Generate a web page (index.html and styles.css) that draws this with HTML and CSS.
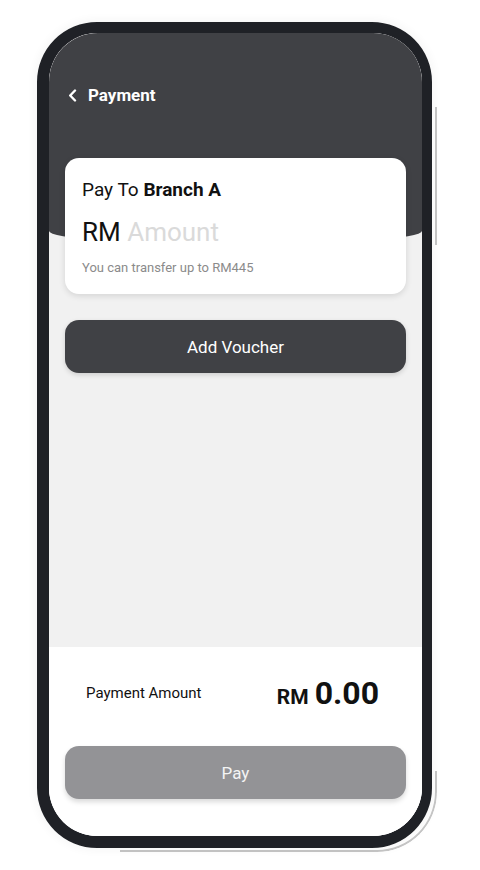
FILE: index.html
```html
<!DOCTYPE html>
<html lang="en">
<head>
<meta charset="utf-8">
<title>Payment</title>
<link rel="stylesheet" href="styles.css">
</head>
<body>
<div class="phone">
  <div class="screen">
    <header class="hero">
      <div class="titlebar">
        <svg class="back" width="9" height="13" viewBox="0 0 9 13" aria-hidden="true"><path d="M7 1.5 L2.2 6.5 L7 11.5" fill="none" stroke="#fff" stroke-width="2.4" stroke-linecap="round" stroke-linejoin="round"/></svg>
        <span class="title">Payment</span>
      </div>
    </header>
    <section class="card">
      <div class="payto">Pay To <b>Branch A</b></div>
      <div class="amount"><span class="cur">RM</span> <span class="ph">Amount</span></div>
      <div class="limit">You can transfer up to RM445</div>
    </section>
    <button class="voucher">Add Voucher</button>
    <div class="spacer"></div>
    <footer class="footer">
      <div class="total">
        <span class="label">Payment Amount</span>
        <span class="sum"><span class="rm">RM</span><span class="num">0.00</span></span>
      </div>
      <button class="pay">Pay</button>
    </footer>
  </div>
</div>
</body>
</html>
```

FILE: styles.css
```css
html {
  margin: 0;
  padding: 0;
  background: #ffffff;
}
body {
  margin: 0;
  padding: 0;
  width: 480px;
  height: 870px;
  overflow: hidden;
  font-family: Roboto, "Noto Sans", "Liberation Sans", sans-serif;
  color: #111;
}
.phone {
  position: relative;
  margin: 22px 0 0 37px;
  width: 395px;
  height: 826px;
  box-sizing: border-box;
  border-style: solid;
  border-color: #1f2126;
  border-width: 11px 10px 12px 12px;
  border-radius: 60px;
  box-shadow: 0 0 8px 3px rgba(0, 0, 0, 0.035);
}
.phone::before {
  content: "";
  position: absolute;
  top: 0;
  left: 71px;
  right: -15px;
  bottom: -16px;
  border-right: 2px solid #c6c6c6;
  border-bottom: 2px solid #c6c6c6;
  border-radius: 0 0 60px 0;
  z-index: -1;
  -webkit-mask-image: linear-gradient(to bottom, transparent 0 74px, #000 74px 212px, transparent 212px 738px, #000 738px);
  mask-image: linear-gradient(to bottom, transparent 0 74px, #000 74px 212px, transparent 212px 738px, #000 738px);
}
.screen {
  height: 100%;
  border-radius: 49px;
  overflow: hidden;
  background: #f1f1f1;
  display: flex;
  flex-direction: column;
}
.hero {
  flex: none;
  height: 212px;
  box-sizing: border-box;
  background: #404145;
  border-radius: 0 0 50% 50% / 0 0 14px 14px;
  padding: 51px 0 0 19px;
}
.titlebar {
  display: flex;
  align-items: center;
  gap: 11px;
  height: 22px;
}
.back {
  display: block;
}
.title {
  color: #fff;
  font-weight: 700;
  font-size: 17px;
  line-height: 22px;
}
.card {
  flex: none;
  position: relative;
  margin: -87px 16px 0;
  background: #fff;
  border-radius: 14px;
  box-shadow: 0 2px 6px rgba(0, 0, 0, 0.12);
  padding: 21px 17px 18px;
}
.payto {
  font-size: 19px;
  line-height: 22px;
}
.payto b {
  font-weight: 700;
}
.amount {
  margin-top: 16px;
  font-size: 26px;
  line-height: 30px;
}
.ph {
  color: #dadada;
}
.limit {
  margin-top: 13px;
  font-size: 13px;
  line-height: 16px;
  color: #8b8b8b;
}
.voucher {
  flex: none;
  margin: 26px 16px 0;
  height: 53px;
  border: 0;
  border-radius: 14px;
  background: #404145;
  color: #fff;
  font-family: inherit;
  font-size: 17px;
  box-shadow: 0 2px 5px rgba(0, 0, 0, 0.15);
}
.spacer {
  flex: 1;
}
.footer {
  flex: none;
  height: 189px;
  box-sizing: border-box;
  background: #fff;
  padding-top: 29px;
  display: flex;
  flex-direction: column;
}
.total {
  display: flex;
  align-items: center;
  justify-content: space-between;
  height: 34px;
  padding: 0 43px 0 37px;
}
.label {
  font-size: 15px;
  line-height: 34px;
}
.sum {
  display: flex;
  align-items: baseline;
  font-weight: 700;
}
.rm {
  font-size: 21px;
  margin-right: 6px;
}
.num {
  font-size: 32px;
  line-height: 34px;
}
.pay {
  margin: 36px 16px 0;
  height: 53px;
  border: 0;
  border-radius: 14px;
  background: #939396;
  color: #f4f4f4;
  font-family: inherit;
  font-size: 17px;
  box-shadow: 0 3px 5px rgba(0, 0, 0, 0.15);
}
```
